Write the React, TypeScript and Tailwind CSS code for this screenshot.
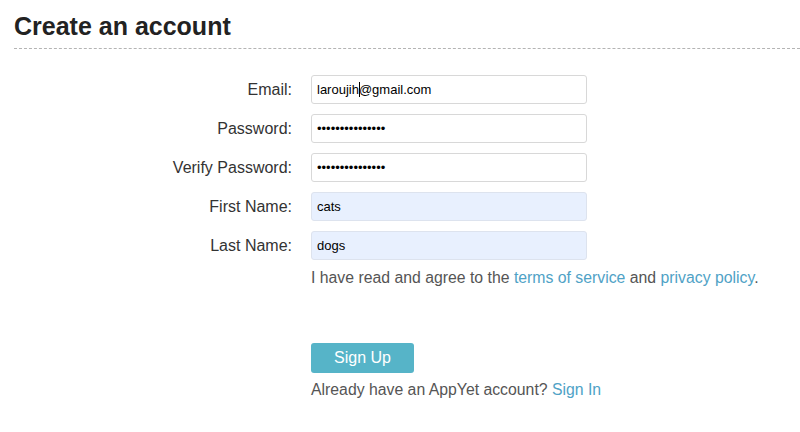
import React from 'react'

const fields = [
  { label: 'Email:', type: 'text', value: 'laroujih@gmail.com', filled: false, caret: true },
  { label: 'Password:', type: 'password', value: 'catsanddogs1234', filled: false },
  { label: 'Verify Password:', type: 'password', value: 'catsanddogs1234', filled: false },
  { label: 'First Name:', type: 'text', value: 'cats', filled: true },
  { label: 'Last Name:', type: 'text', value: 'dogs', filled: true },
]

export default function App() {
  return (
    <div className="min-h-[432px] bg-white pl-[14px] font-['Liberation_Sans',Arial,sans-serif]">
      <h1 className="mt-[11px] border-b border-dashed border-[#b4b4b4] pb-[7px] text-[25px] font-bold leading-[30px] text-[#222]">
        Create an account
      </h1>

      <form className="mt-[26px]" onSubmit={(e) => e.preventDefault()}>
        <div className="grid grid-cols-[278px_276px] gap-x-[19px] gap-y-[10px]">
          {fields.map((f) => (
            <React.Fragment key={f.label}>
              <label className="flex items-center justify-end text-[16px] text-[#333]">{f.label}</label>
              <div className="relative">
                <input
                  type={f.type}
                  defaultValue={f.value}
                  readOnly
                  className={`block h-[29px] w-full rounded-[3px] border px-[5px] text-[13px] text-black outline-none ${
                    f.filled ? 'border-[#dde3ee] bg-[#e8f0fe]' : 'border-[#d8d8d8] bg-white'
                  }`}
                />
                {f.caret && <span className="absolute left-[48px] top-[7px] h-[15px] w-px bg-black" />}
              </div>
            </React.Fragment>
          ))}
        </div>

        <div className="ml-[297px]">
          <p className="mt-[6px] text-[15.8px] leading-[24px] text-[#555]">
            I have read and agree to the <a className="text-[#4fa2c6]">terms of service</a> and{' '}
            <a className="text-[#4fa2c6]">privacy policy</a>.
          </p>
          <button
            type="submit"
            className="mt-[53px] h-[30px] w-[103px] rounded-[3px] bg-[#56b4c8] text-[16px] text-white"
          >
            Sign Up
          </button>
          <p className="mt-[5px] text-[15.8px] leading-[24px] text-[#555]">
            Already have an AppYet account? <a className="text-[#4fa2c6]">Sign In</a>
          </p>
        </div>
      </form>
    </div>
  )
}
